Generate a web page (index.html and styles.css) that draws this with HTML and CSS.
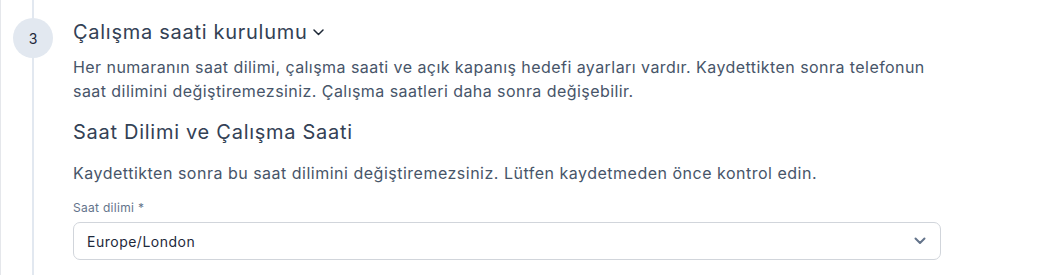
FILE: index.html
```html
<!DOCTYPE html>
<html lang="tr">
<head>
<meta charset="utf-8">
<link rel="stylesheet" href="styles.css">
</head>
<body>
<div class="page">
  <div class="step">
    <div class="rail">
      <div class="badge">3</div>
    </div>
    <div class="content">
      <h2 class="step-title">Çalışma saati kurulumu
        <svg class="title-chev" width="11" height="7" viewBox="0 0 11 7" fill="none"><path d="M1 1l4.5 4.5L10 1" stroke="#1f2937" stroke-width="1.5" stroke-linecap="round" stroke-linejoin="round"/></svg>
      </h2>
      <p class="step-desc">Her numaranın saat dilimi, çalışma saati ve açık kapanış hedefi ayarları vardır. Kaydettikten sonra telefonun saat dilimini değiştiremezsiniz. Çalışma saatleri daha sonra değişebilir.</p>
      <h3 class="section-title">Saat Dilimi ve Çalışma Saati</h3>
      <p class="section-desc">Kaydettikten sonra bu saat dilimini değiştiremezsiniz. Lütfen kaydetmeden önce kontrol edin.</p>
      <label class="field-label">Saat dilimi *</label>
      <div class="select">
        <span class="select-value">Europe/London</span>
        <svg class="select-chev" width="12" height="8" viewBox="0 0 12 8" fill="none"><path d="M1.5 1.5L6 6l4.5-4.5" stroke="#64748b" stroke-width="2" stroke-linecap="round" stroke-linejoin="round"/></svg>
      </div>
    </div>
  </div>
</div>
</body>
</html>
```
FILE: styles.css
```css
* { box-sizing: border-box; }
html, body { margin: 0; padding: 0; background: #fff; }
body {
  font-family: "Inter", "Noto Sans", sans-serif;
  color: #334155;
  width: 1045px;
  height: 275px;
  overflow: hidden;
}
.page {
  border-left: 1px solid #e5e7eb;
  height: 275px;
}
.step {
  display: flex;
  height: 100%;
}
.rail {
  position: relative;
  width: 72px;
  flex: none;
  background: linear-gradient(#e2e8f0, #e2e8f0) no-repeat 31px 0 / 2px 100%;
  padding-top: 18px;
  padding-left: 12px;
}
.badge {
  width: 40px;
  height: 40px;
  border-radius: 50%;
  background: #e2e8f0;
  color: #1e293b;
  font-size: 14px;
  display: flex;
  align-items: center;
  justify-content: center;
}
.content {
  flex: none;
  width: 868px;
  padding-top: 18px;
}
.step-title {
  margin: 0;
  font-size: 20px;
  line-height: 28px;
  font-weight: 400;
  letter-spacing: 0.72px;
  color: #334155;
  display: flex;
  align-items: center;
  gap: 5px;
}
.title-chev { margin-top: 1px; }
.step-desc {
  margin: 9px 0 0;
  font-size: 16px;
  line-height: 24px;
  letter-spacing: 0.44px;
  color: #475569;
  width: 870px;
}
.section-title {
  margin: 15px 0 0;
  font-size: 20px;
  line-height: 28px;
  font-weight: 400;
  letter-spacing: 0.72px;
  color: #334155;
}
.section-desc {
  margin: 15px 0 0;
  font-size: 16px;
  line-height: 24px;
  letter-spacing: 0.5px;
  color: #475569;
}
.field-label {
  display: block;
  margin-top: 15px;
  font-size: 12px;
  line-height: 16px;
  letter-spacing: 0.3px;
  color: #64748b;
}
.select {
  margin-top: 6px;
  width: 868px;
  height: 38px;
  border: 1px solid #d1d5db;
  border-radius: 7px;
  display: flex;
  align-items: center;
  justify-content: space-between;
  padding: 0 13px 0 13px;
  background: #fff;
}
.select-value {
  font-size: 14px;
  letter-spacing: 0.5px;
  color: #1e293b;
}
.select-chev { margin-right: 1px; }
```
